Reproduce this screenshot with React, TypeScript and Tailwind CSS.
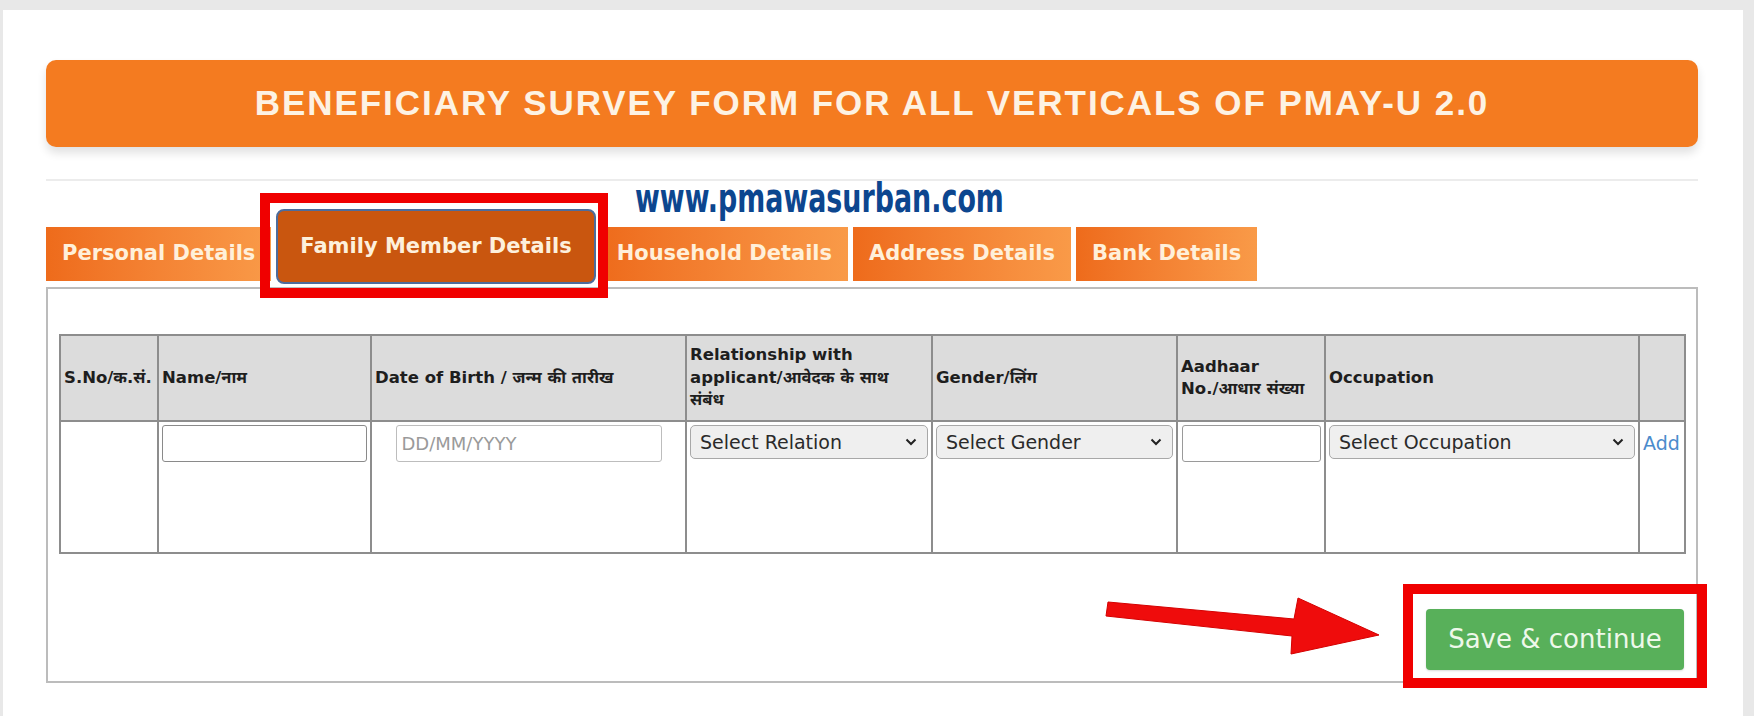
import React from "react";

const TABS = [
  { key: "personal", label: "Personal Details" },
  { key: "family", label: "Family Member Details", active: true },
  { key: "household", label: "Household Details" },
  { key: "address", label: "Address Details" },
  { key: "bank", label: "Bank Details" },
];

const COLS = [98, 213, 315, 246, 245, 148, 314, 46];

function Chevron() {
  return (
    <svg width="12" height="8" viewBox="0 0 12 8" className="shrink-0">
      <path d="M1.5 1.5l4.5 4.5 4.5-4.5" fill="none" stroke="#222" strokeWidth="2" />
    </svg>
  );
}

function FakeSelect({ label }: { label: string }) {
  return (
    <div className="flex h-[34px] w-full items-center justify-between rounded-[5px] border border-[#a8a8a8] bg-[#efefef] pl-[9px] pr-[10px] text-[19px] text-[#2a2a2a]">
      <span>{label}</span>
      <Chevron />
    </div>
  );
}

function Tab({ label, active }: { label: string; active?: boolean }) {
  if (active) {
    return (
      <div className="flex h-[75px] items-center rounded-[8px] border-2 border-[#4d6c9c] bg-[#c9560f] px-[22px] text-[21px] font-bold text-[#fdf0dc]">
        {label}
      </div>
    );
  }
  return (
    <div className="mt-[18px] flex h-[54px] items-center bg-linear-to-r from-[#ee6b1b] to-[#f99a48] px-[16px] text-[21px] font-bold text-[#fff0da]">
      {label}
    </div>
  );
}

export default function App() {
  const th = "border-2 border-[#8d8d8d] px-[3px] text-left align-middle font-bold text-[16.5px] leading-[22.5px] text-[#1e1e1e]";
  const td = "border-2 border-[#8d8d8d] p-[3px] align-top";

  return (
    <div className="relative h-[716px] w-[1754px] overflow-hidden bg-[#e8e8e8] font-['DejaVu_Sans','Noto_Sans_Devanagari','Noto_Sans',sans-serif]">
      <div className="ml-[3px] mr-[11px] mt-[10px] h-[706px] bg-white pl-[43px] pr-[45px] pt-[50px]">
        <div className="flex h-[87px] items-center justify-center rounded-[10px] bg-[#f47b20] shadow-[0_6px_10px_rgba(0,0,0,0.12)]">
          <h1 className="font-['Liberation_Sans',Arial,sans-serif] text-[35px] font-bold tracking-[1.95px] text-[#fdf2e3]">
            BENEFICIARY SURVEY FORM FOR ALL VERTICALS OF PMAY-U 2.0
          </h1>
        </div>

        <div className="mt-[32px] h-[2px] bg-[#ececec]" />

        <div className="mt-[28px] flex items-start gap-[5px]">
          {TABS.map((t) => (
            <Tab key={t.key} label={t.label} active={t.active} />
          ))}
        </div>

        <div className="mt-[3px] border-2 border-[#bcbcbc] px-[11px] pb-[11px] pt-[45px]">
          <table className="w-[1625px] table-fixed border-collapse">
            <colgroup>
              {COLS.map((w, i) => (
                <col key={i} style={{ width: w }} />
              ))}
            </colgroup>
            <thead>
              <tr className="h-[86px] bg-[#dcdcdc]">
                <th className={th}>S.No/क.सं.</th>
                <th className={th}>Name/नाम</th>
                <th className={th}>Date of Birth / जन्म की तारीख</th>
                <th className={th}>
                  Relationship with
                  <br />
                  applicant/आवेदक के साथ
                  <br />
                  संबंध
                </th>
                <th className={th}>Gender/लिंग</th>
                <th className={th}>
                  Aadhaar
                  <br />
                  No./आधार संख्या
                </th>
                <th className={th}>Occupation</th>
                <th className={th}></th>
              </tr>
            </thead>
            <tbody>
              <tr className="h-[132px]">
                <td className={td}></td>
                <td className={td}>
                  <input className="block h-[37px] w-full rounded-[3px] border border-[#8a8a8a] bg-white px-2 text-[18px] outline-none" />
                </td>
                <td className={td}>
                  <input
                    placeholder="DD/MM/YYYY"
                    className="mx-auto block h-[37px] w-[266px] rounded-[3px] border border-[#bdbdbd] bg-white px-[5px] text-[18px] text-[#333] outline-none placeholder:text-[#9a9a9a]"
                  />
                </td>
                <td className={td}>
                  <FakeSelect label="Select Relation" />
                </td>
                <td className={td}>
                  <FakeSelect label="Select Gender" />
                </td>
                <td className={td}>
                  <input className="ml-[1px] block h-[37px] w-[139px] rounded-[3px] border border-[#9a9a9a] bg-white px-2 text-[18px] outline-none" />
                </td>
                <td className={td}>
                  <FakeSelect label="Select Occupation" />
                </td>
                <td className={td}>
                  <a href="#" className="block pt-[4px] text-[19px] text-[#4b8bcc]">
                    Add
                  </a>
                </td>
              </tr>
            </tbody>
          </table>

          <div className="mt-[55px] flex justify-end">
            <button className="mr-[1px] h-[61px] w-[258px] rounded-[4px] bg-[#58b05a] text-[26px] text-[#eef8ea] shadow-[0_1px_2px_rgba(0,0,0,0.15)]">
              Save &amp; continue
            </button>
          </div>
        </div>
      </div>

      {/* watermark + annotation overlays */}
      <div className="absolute left-[635px] top-[178px] origin-left scale-x-[0.672] text-[40px] font-bold leading-none text-[#0c468f] whitespace-nowrap">
        www.pmawasurban.com
      </div>
      <div className="absolute left-[260px] top-[193px] h-[105px] w-[348px] border-[10px] border-[#f00000]" />
      <div className="absolute left-[1403px] top-[584px] h-[104px] w-[304px] border-[10px] border-[#f00000]" />
      <svg className="absolute left-[1100px] top-[590px]" width="290" height="70" viewBox="0 0 290 70">
        <polygon
          points="8,12 194,29 198,8 279,45 191,64 192,46 6,26"
          fill="#ef0c0c"
          stroke="#d40000"
          strokeWidth="1"
        />
      </svg>
    </div>
  );
}
